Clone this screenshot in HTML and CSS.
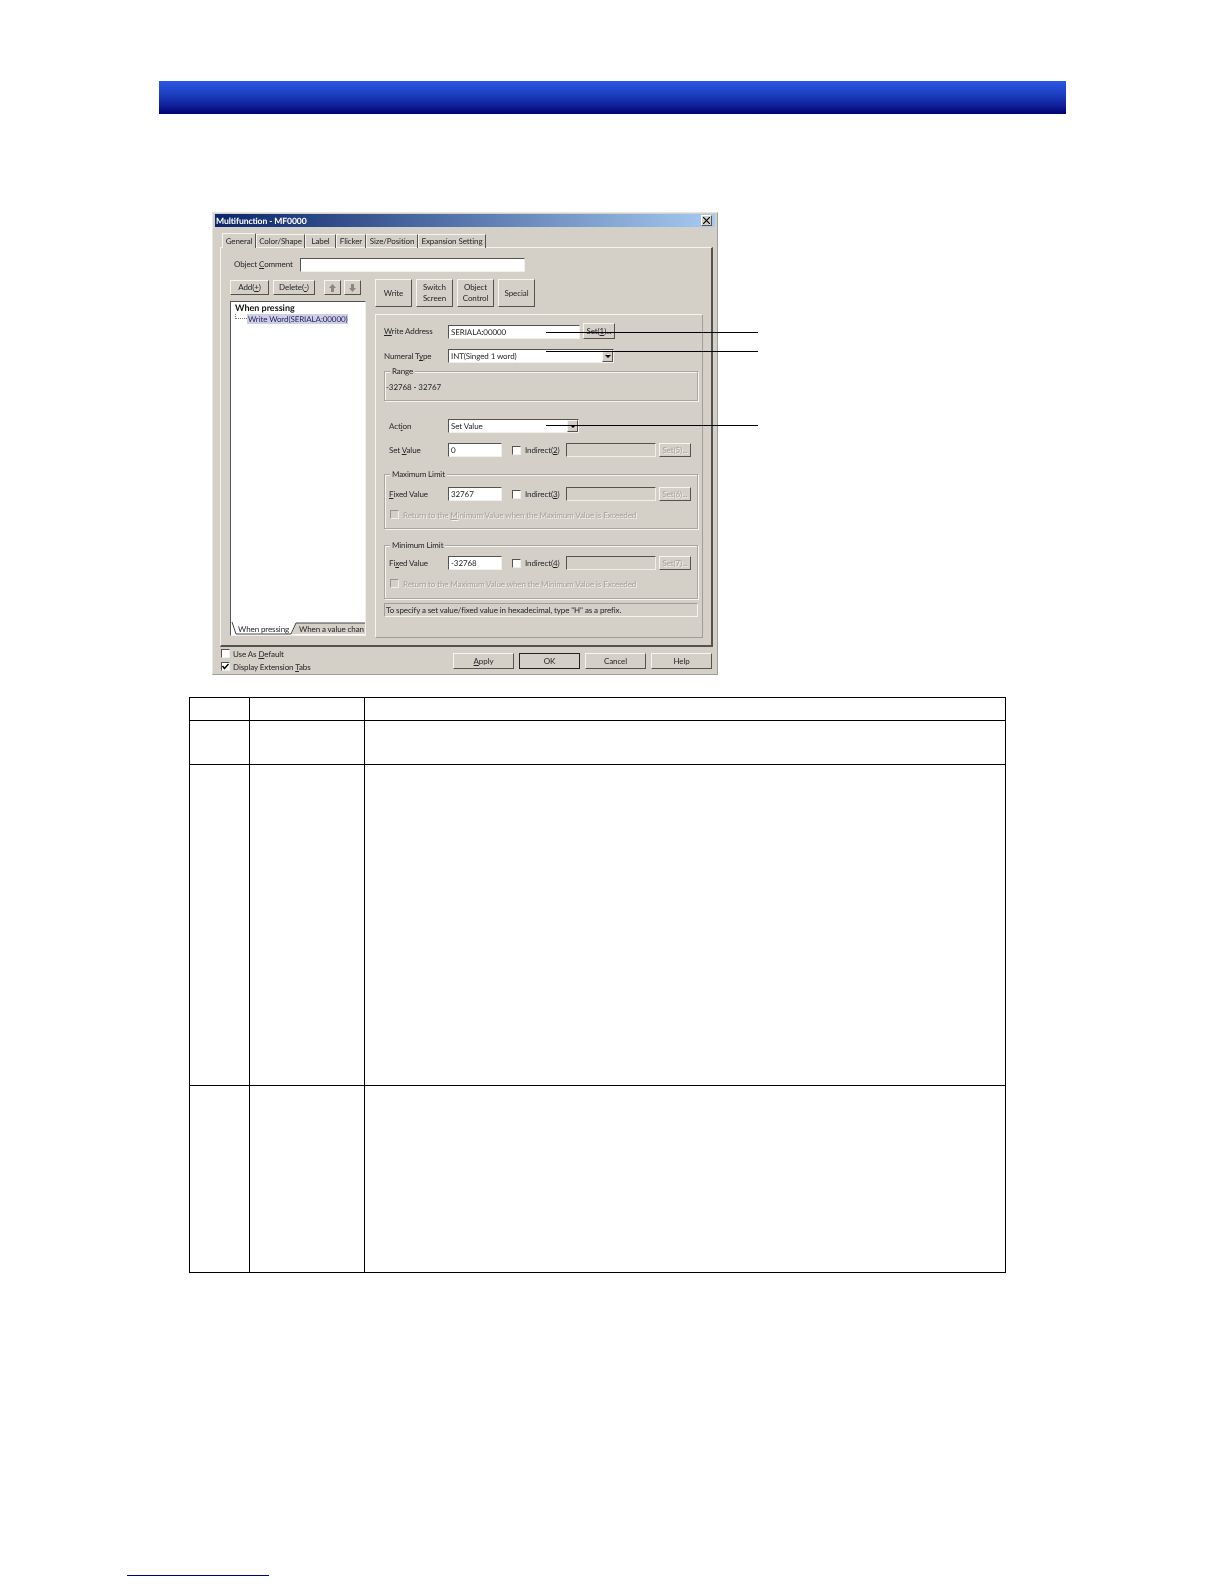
FILE: index.html
```html
<!DOCTYPE html>
<html lang="en">
<head>
    <meta charset="UTF-8">
    <title>Multifunction - MF0000</title>
    <link rel="stylesheet" href="styles.css">
</head>
<body>
    <div class="banner"></div>

    <div class="figure">
        <div class="dialog">
            <div class="titlebar">
                <span>Multifunction - MF0000</span>
                <button class="close-btn" aria-label="Close">
                    <svg width="7" height="7" viewBox="0 0 7 7"><path d="M0 0L7 7M7 0L0 7" stroke="#000" stroke-width="1.2"/></svg>
                </button>
            </div>

            <ul class="tabs">
                <li class="tab active tab-general">General</li>
                <li class="tab tab-color">Color/Shape</li>
                <li class="tab tab-label">Label</li>
                <li class="tab tab-flicker">Flicker</li>
                <li class="tab tab-size">Size/Position</li>
                <li class="tab tab-exp">Expansion Setting</li>
            </ul>

            <div class="tabpage">
                <div class="comment-row">
                    <label class="comment-label">Object <u>C</u>omment</label>
                    <div class="field comment-field"></div>
                </div>

                <div class="columns">
                    <div class="left-col">
                        <div class="tool-row">
                            <button class="btn btn-add">Add(<u>+</u>)</button>
                            <button class="btn btn-delete">Delete(<u>-</u>)</button>
                            <button class="btn btn-arrow">
                                <svg width="7" height="8" viewBox="0 0 7 8"><path d="M3.5 0L7 4H5V8H2V4H0Z" fill="#8a8780"/></svg>
                            </button>
                            <button class="btn btn-arrow">
                                <svg width="7" height="8" viewBox="0 0 7 8"><path d="M3.5 8L7 4H5V0H2V4H0Z" fill="#8a8780"/></svg>
                            </button>
                        </div>
                        <div class="tree">
                            <div class="tree-root">When pressing</div>
                            <div class="tree-item">
                                <span class="tree-dots"></span>
                                <span class="tree-selected">Write Word(SERIALA:00000)</span>
                            </div>
                            <div class="tree-tabs">
                                <svg class="tree-tab-shape" width="134" height="13" viewBox="0 0 134 13">
                                    <path d="M61 12L65 1H134V12Z" fill="#d4d0c8"/>
                                    <path d="M1 0L5 12H60L65 1H134" fill="none" stroke="#444" stroke-width="1"/>
                                </svg>
                                <span class="tree-tab tree-tab-first">When pressing</span>
                                <span class="tree-tab tree-tab-second">When a value chan</span>
                            </div>
                        </div>
                    </div>

                    <div class="right-col">
                        <div class="type-row">
                            <button class="btn type-btn">Write</button>
                            <button class="btn type-btn">Switch<br>Screen</button>
                            <button class="btn type-btn">Object<br>Control</button>
                            <button class="btn type-btn">Special</button>
                        </div>

                        <div class="panel">
                            <div class="row row-address">
                                <label class="row-label"><u>W</u>rite Address</label>
                                <div class="field address-field">SERIALA:00000</div>
                                <button class="btn set-btn">Set(<u>1</u>)...</button>
                            </div>
                            <div class="row row-numeral">
                                <label class="row-label">Numeral T<u>y</u>pe</label>
                                <div class="field combo numeral-combo">INT(Singed 1 word)<span class="combo-arrow"></span></div>
                            </div>

                            <div class="group range-group">
                                <span class="legend">Range</span>
                                <div class="range-text">-32768 - 32767</div>
                            </div>

                            <div class="row row-action">
                                <label class="row-label row-label-in">Act<u>i</u>on</label>
                                <div class="field combo action-combo">Set Value<span class="combo-arrow"></span></div>
                            </div>
                            <div class="row row-value">
                                <label class="row-label row-label-in">Set <u>V</u>alue</label>
                                <div class="field value-field">0</div>
                                <span class="check"></span>
                                <label class="indirect">Indirect(<u>2</u>)</label>
                                <div class="field field-off"></div>
                                <button class="btn set-btn set-off">Set(5)...</button>
                            </div>

                            <div class="group limit-group max-group">
                                <span class="legend">Maximum Limit</span>
                                <div class="row limit-row">
                                    <label class="limit-label"><u>F</u>ixed Value</label>
                                    <div class="field value-field">32767</div>
                                    <span class="check"></span>
                                    <label class="indirect">Indirect(<u>3</u>)</label>
                                    <div class="field field-off"></div>
                                    <button class="btn set-btn set-off">Set(6)...</button>
                                </div>
                                <div class="return-row">
                                    <span class="check check-off"></span>
                                    <span>Return to the <u>M</u>inimum Value when the Maximum Value is Exceeded</span>
                                </div>
                            </div>

                            <div class="group limit-group min-group">
                                <span class="legend">Minimum Limit</span>
                                <div class="row limit-row">
                                    <label class="limit-label">Fi<u>x</u>ed Value</label>
                                    <div class="field value-field">-32768</div>
                                    <span class="check"></span>
                                    <label class="indirect">Indirect(<u>4</u>)</label>
                                    <div class="field field-off"></div>
                                    <button class="btn set-btn set-off">Set(7)...</button>
                                </div>
                                <div class="return-row">
                                    <span class="check check-off"></span>
                                    <span>Return to the Maximum Value when the Minimum Value is Exceeded</span>
                                </div>
                            </div>

                            <div class="hint">To specify a set value/fixed value in hexadecimal, type "H" as a prefix.</div>
                        </div>
                    </div>
                </div>
            </div>

            <div class="footer">
                <div class="footer-checks">
                    <div class="footer-check"><span class="check"></span><span>Use As <u>D</u>efault</span></div>
                    <div class="footer-check">
                        <span class="check">
                            <svg width="7" height="7" viewBox="0 0 7 7"><path d="M0.5 3L2.5 5.5L6.5 1" fill="none" stroke="#000" stroke-width="1.5"/></svg>
                        </span>
                        <span>Display Extension <u>T</u>abs</span>
                    </div>
                </div>
                <div class="footer-btns">
                    <button class="btn foot-btn"><u>A</u>pply</button>
                    <button class="btn foot-btn foot-default">OK</button>
                    <button class="btn foot-btn">Cancel</button>
                    <button class="btn foot-btn">Help</button>
                </div>
            </div>
        </div>

        <!-- callout lines -->
        <span class="callout callout-1"></span>
        <span class="callout callout-2"></span>
        <span class="callout callout-3"></span>
    </div>

    <table class="spec-table">
        <colgroup>
            <col class="col-no">
            <col class="col-name">
            <col class="col-desc">
        </colgroup>
        <tr class="row-head"><th></th><th></th><th></th></tr>
        <tr class="row-a"><td></td><td></td><td></td></tr>
        <tr class="row-b"><td></td><td></td><td></td></tr>
        <tr class="row-c"><td></td><td></td><td></td></tr>
    </table>

    <div class="page-rule"></div>
</body>
</html>
```

FILE: styles.css
```css
/* ========== base ========== */
:root {
    --face: #d4d0c8;
    --dark: #6f6d68;
    --ink: #26262a;
}

* {
    margin: 0;
    padding: 0;
    box-sizing: border-box;
}

html, body {
    background: #fff;
}

body {
    width: 1224px;
    height: 1584px;
    overflow: hidden;
    padding-top: 81px;
    font-family: Lato, "Liberation Sans", Arial, sans-serif;
    text-rendering: geometricPrecision;
}

/* ========== page furniture ========== */
.banner {
    width: 907px;
    height: 33px;
    margin-left: 159px;
    background: linear-gradient(to bottom, #2a57e6 0%, #1d3fc0 40%, #101f99 75%, #000070 100%);
}

.figure {
    position: relative;
    width: 506px;
    margin: 98px 0 0 212px;
}

.callout {
    position: absolute;
    left: 334px;
    width: 212px;
    height: 1px;
    background: #000;
}
.callout-1 { top: 120px; }
.callout-2 { top: 139px; }
.callout-3 { top: 213px; }

.spec-table {
    width: 817px;
    height: 575px;
    margin: 22px 0 0 189px;
    border-collapse: collapse;
    table-layout: fixed;
}
.spec-table th,
.spec-table td { border: 1px solid #000; }
.col-no { width: 60px; }
.col-name { width: 115px; }
.row-head { height: 23px; }
.row-a { height: 44px; }
.row-b { height: 321px; }
.row-c { height: 187px; }

.page-rule {
    width: 142px;
    height: 1px;
    margin: 302px 0 0 127px;
    background: #000080;
}

/* ========== dialog ========== */
.dialog {
    height: 463px;
    padding: 1px 2px 2px;
    background: var(--face);
    border: 1px solid #e8e6e0;
    border-right-color: #a09e98;
    border-bottom-color: #a09e98;
    font-size: 8px;
    letter-spacing: -0.1px;
    color: var(--ink);
    filter: blur(0.3px);
}

.titlebar {
    height: 13px;
    padding-left: 1px;
    display: flex;
    align-items: center;
    justify-content: space-between;
    background: linear-gradient(to right, #0a246a, #a6caf0);
    color: #fff;
    font-size: 8.6px;
    font-weight: bold;
}

.close-btn {
    width: 11px;
    height: 11px;
    margin-right: 3px;
    display: flex;
    align-items: center;
    justify-content: center;
    background: var(--face);
    border: 1px solid #fff;
    border-right-color: #555;
    border-bottom-color: #555;
}

.tabs {
    list-style: none;
    display: flex;
    align-items: flex-end;
    height: 15px;
    margin: 6px 0 0 7px;
}

.tab {
    height: 14px;
    line-height: 13px;
    text-align: center;
    white-space: nowrap;
    border-top: 1px solid #f4f3ee;
    border-left: 1px solid #f4f3ee;
    border-right: 1px solid #55534e;
}
.tab.active { height: 15px; line-height: 14px; position: relative; z-index: 1; background: var(--face); }
.tab-general { width: 34px; }
.tab-color { width: 49px; }
.tab-label { width: 31px; }
.tab-flicker { width: 30px; }
.tab-size { width: 52px; }
.tab-exp { width: 68px; }

.tabpage {
    width: 493px;
    height: 400px;
    margin: -1px 0 0 5px;
    padding: 10px 0 0 9px;
    border: 1px solid #f4f3ee;
    border-right: 2px solid #55534e;
    border-bottom: 2px solid #55534e;
}

.comment-row {
    display: flex;
    align-items: center;
    height: 13px;
}

.comment-label {
    width: 70px;
    padding-left: 4px;
    margin-top: -2px;
    white-space: nowrap;
}

.comment-field { width: 225px; height: 13px; }

.columns {
    display: flex;
    gap: 9px;
    margin-top: 8px;
}

.left-col { width: 136px; padding-top: 1px; }
.right-col { width: 328px; }

/* ========== controls ========== */
.btn {
    display: inline-flex;
    align-items: center;
    justify-content: center;
    background: var(--face);
    border: 1px solid #f6f5f0;
    border-right-color: #55534e;
    border-bottom-color: #55534e;
    font: inherit;
    letter-spacing: inherit;
    color: inherit;
    line-height: 11px;
}

.field {
    height: 14px;
    padding-left: 2px;
    line-height: 12px;
    white-space: nowrap;
    background: #fff;
    border: 1px solid #f0efea;
    border-top-color: #55534e;
    border-left-color: #55534e;
}

.field-off {
    width: 90px;
    margin-left: 0;
    background: var(--face);
}

.check {
    display: inline-flex;
    align-items: center;
    justify-content: center;
    width: 9px;
    height: 9px;
    flex: none;
    background: #fff;
    border: 1px solid #f0efea;
    border-top-color: #55534e;
    border-left-color: #55534e;
}
.check-off { background: var(--face); border-top-color: #98968f; border-left-color: #98968f; }

.combo { position: relative; }

.combo-arrow {
    position: absolute;
    top: 0;
    right: 0;
    width: 11px;
    height: 12px;
    background: var(--face);
    border: 1px solid #f6f5f0;
    border-right-color: #55534e;
    border-bottom-color: #55534e;
}
.combo-arrow::after {
    content: "";
    position: absolute;
    top: 4px;
    left: 2px;
    border: 3px solid transparent;
    border-bottom: 0;
    border-top-color: #000;
}

/* ========== left column ========== */
.tool-row {
    display: flex;
    height: 15px;
}
.btn-add { width: 39px; }
.btn-delete { width: 42px; margin-left: 4px; }
.btn-arrow { width: 17px; margin-left: 3px; }
.btn-delete + .btn-arrow { margin-left: 9px; }

.tree {
    position: relative;
    height: 335px;
    margin-top: 6px;
    padding: 0 0 0 4px;
    background: #fff;
    border: 1px solid #f0efea;
    border-top-color: #55534e;
    border-left-color: #55534e;
}

.tree-root {
    font-weight: bold;
    font-size: 9px;
    letter-spacing: 0;
    color: #111;
    line-height: 11px;
}

.tree-item {
    display: flex;
    align-items: center;
    height: 11px;
}

.tree-dots {
    width: 12px;
    height: 5px;
    border-left: 1px dotted #777;
    border-bottom: 1px dotted #777;
    margin-top: -4px;
}

.tree-selected {
    width: 101px;
    padding-left: 1px;
    line-height: 10px;
    background: #cfcfe2;
    color: #23236b;
    white-space: nowrap;
}

.tree-tabs {
    position: absolute;
    left: 0;
    right: 0;
    bottom: 0;
    display: flex;
    height: 13px;
    background: #fff;
}

.tree-tab-shape {
    position: absolute;
    top: 0;
    left: 0;
}

.tree-tab {
    position: relative;
    line-height: 15px;
    white-space: nowrap;
}
.tree-tab-first { width: 64px; padding-left: 7px; }
.tree-tab-second { padding-left: 4px; }

/* ========== right column ========== */
.type-row {
    display: flex;
    gap: 4px;
    height: 28px;
}
.type-btn { width: 37px; }

.panel {
    height: 324px;
    margin-top: 7px;
    padding: 8px 0 0 8px;
    border: 1px solid #f6f5f0;
    border-right-color: #a09e98;
    border-bottom-color: #a09e98;
}

.row {
    display: flex;
    align-items: center;
}

.row-label { width: 64px; }
.row-label-in { padding-left: 5px; }

.row-address { height: 16px; }
.address-field { width: 132px; align-self: flex-end; }
.set-btn { width: 32px; height: 16px; margin-left: 3px; }
.set-off { height: 14px; color: #a5a39d; text-shadow: 1px 1px 0 #f4f3ee; }

.row-numeral { height: 14px; margin-top: 10px; }
.numeral-combo { width: 166px; }

.group {
    position: relative;
    width: 314px;
    border: 1px solid #a9a7a1;
    box-shadow: 1px 1px 0 #f6f5f0, inset 1px 1px 0 #f6f5f0;
}

.legend {
    position: absolute;
    top: -6px;
    left: 5px;
    padding: 0 2px;
    line-height: 11px;
    background: var(--face);
}

.range-group { height: 30px; margin-top: 8px; }
.range-text { padding: 10px 0 0 1px; line-height: 11px; }

.row-action { height: 14px; margin-top: 18px; }
.action-combo { width: 131px; }

.row-value { height: 14px; margin-top: 10px; }
.value-field { width: 54px; }
.row .check { margin-left: 10px; }

.indirect {
    width: 41px;
    margin-left: 4px;
    white-space: nowrap;
}

.limit-group { padding-left: 4px; }
.max-group { height: 55px; margin-top: 17px; }
.min-group { height: 54px; margin-top: 16px; }

.limit-row { height: 14px; margin-top: 12px; }
.min-group .limit-row { margin-top: 10px; }
.limit-label { width: 59px; }

.return-row {
    display: flex;
    align-items: center;
    gap: 4px;
    height: 9px;
    margin: 9px 0 0 1px;
    color: #a5a39d;
    text-shadow: 1px 1px 0 #f4f3ee;
    white-space: nowrap;
}

.hint {
    width: 314px;
    height: 14px;
    margin-top: 4px;
    padding-left: 1px;
    line-height: 12px;
    border: 1px solid #f4f3ee;
    border-top-color: #a09e98;
    border-left-color: #a09e98;
}

/* ========== footer ========== */
.footer {
    display: flex;
    justify-content: space-between;
    margin: 0 0 0 6px;
}

.footer-checks {
    display: flex;
    flex-direction: column;
    gap: 4px;
    padding-top: 2px;
}

.footer-check {
    display: flex;
    align-items: center;
    gap: 3px;
    height: 9px;
}

.footer-btns {
    display: flex;
    gap: 5px;
    padding: 6px 3px 0 0;
}

.foot-btn { width: 61px; height: 16px; }
.foot-default { outline: 1px solid #222; outline-offset: -1px; }
```
